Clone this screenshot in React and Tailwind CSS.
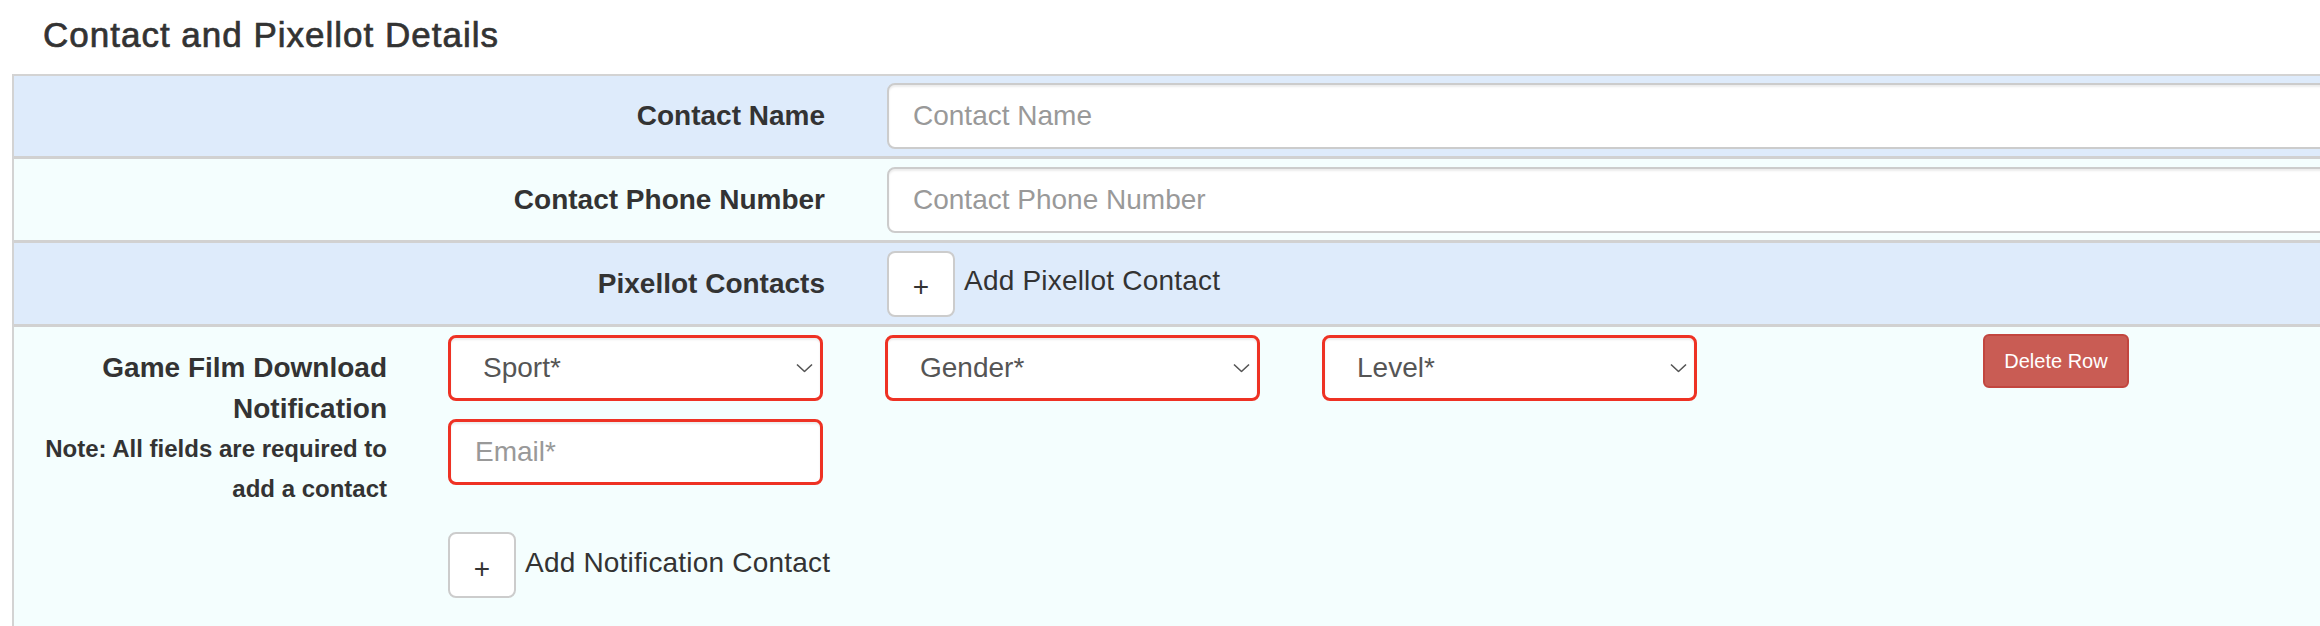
import React from 'react';

// Small chevron drawn over the right end of a select box.
function Chevron() {
  return (
    <svg
      width="17"
      height="9"
      viewBox="0 0 17 9"
      fill="none"
      className="pointer-events-none absolute right-[10px] top-1/2 -translate-y-1/2"
    >
      <path d="M1 1l7.5 7L16 1" stroke="#555" strokeWidth="1.6" />
    </svg>
  );
}

function RequiredSelect({ label }) {
  return (
    <div className="relative">
      <select
        defaultValue=""
        className="h-[66px] w-full appearance-none rounded-[8px] border-[3px] border-[#ee3224] bg-white pl-[32px] pr-[40px] text-[28px] text-[#555] shadow-[inset_0_2px_2px_rgba(0,0,0,0.075)] outline-none"
      >
        <option value="">{label}</option>
      </select>
      <Chevron />
    </div>
  );
}

function AddButton({ children }) {
  return (
    <div className="flex items-center">
      <button
        type="button"
        className="flex h-[66px] w-[68px] shrink-0 items-center justify-center rounded-[8px] border-2 border-[#cccccc] bg-white pt-[7px] text-[28px] leading-none text-[#333]"
      >
        +
      </button>
      <span className="ml-[9px] whitespace-nowrap pb-[5px] text-[28px] leading-[40px] tracking-[0.2px] text-[#333]">
        {children}
      </span>
    </div>
  );
}

function TextField({ placeholder, invalid }) {
  return (
    <input
      type="text"
      placeholder={placeholder}
      className={`h-[66px] w-full rounded-[8px] bg-white px-[24px] text-[28px] text-[#555] shadow-[inset_0_2px_2px_rgba(0,0,0,0.075)] outline-none placeholder:text-[#999] ${
        invalid ? 'border-[3px] border-[#ee3224]' : 'border-2 border-[#cccccc]'
      }`}
    />
  );
}

function Row({ label, bg, height, first, children }) {
  return (
    <div
      className={`flex items-center ${bg} ${height} ${first ? '' : 'border-t-[3px] border-[#d1d1d1]'}`}
    >
      <div className="w-[841px] shrink-0 pr-[30px] text-right text-[28px] font-bold leading-[40px] text-[#333]">
        {label}
      </div>
      <div className="flex-1 pl-[32px]">{children}</div>
    </div>
  );
}

export default function App() {
  return (
    <div className="min-h-[626px] w-full overflow-hidden bg-white font-['Liberation_Sans',Arial,sans-serif] text-[#333]">
      {/* medium weight: regular face thickened a little */}
      <h2 className="h-[74px] pl-[43px] pt-[15px] text-[35px] font-normal leading-[40px] tracking-[1px] text-[#333] [-webkit-text-stroke:0.7px_#333]">
        Contact and Pixellot Details
      </h2>

      <div className="ml-[12px] w-[2400px] border-l-2 border-t-2 border-[#d3d3d3]">
        <Row first label="Contact Name" bg="bg-[#deebfb]" height="h-[80px]">
          <TextField placeholder="Contact Name" />
        </Row>
        <Row label="Contact Phone Number" bg="bg-[#f4fefe]" height="h-[84px]">
          <TextField placeholder="Contact Phone Number" />
        </Row>
        <Row label="Pixellot Contacts" bg="bg-[#deebfb]" height="h-[84px]">
          <AddButton>Add Pixellot Contact</AddButton>
        </Row>

        {/* Notification contacts */}
        <div className="flex items-start border-t-[3px] border-[#d1d1d1] bg-[#f4fefe] pb-[30px]">
          <div className="w-[403px] shrink-0 whitespace-nowrap pr-[30px] pt-[20px] text-right font-bold text-[#333]">
            <div className="text-[28px] leading-[41px]">
              Game Film Download
              <br />
              Notification
            </div>
            <div className="text-[24px] leading-[40px]">
              Note: All fields are required to
              <br />
              add a contact
            </div>
          </div>

          <div className="grid grid-cols-[repeat(4,437px)] pt-[8px]">
            <div className="px-[31px]">
              <RequiredSelect label="Sport*" />
              <div className="mt-[18px]">
                <TextField placeholder="Email*" invalid />
              </div>
              <div className="mt-[47px]">
                <AddButton>Add Notification Contact</AddButton>
              </div>
            </div>
            <div className="px-[31px]">
              <RequiredSelect label="Gender*" />
            </div>
            <div className="px-[31px]">
              <RequiredSelect label="Level*" />
            </div>
            <div className="flex justify-end pl-[31px] pr-[36px]">
              <button
                type="button"
                className="-mt-px h-[54px] w-[146px] rounded-[6px] border-2 border-[#c2463f] bg-[#c95c54] text-[20px] text-white"
              >
                Delete Row
              </button>
            </div>
          </div>
        </div>
      </div>
    </div>
  );
}
